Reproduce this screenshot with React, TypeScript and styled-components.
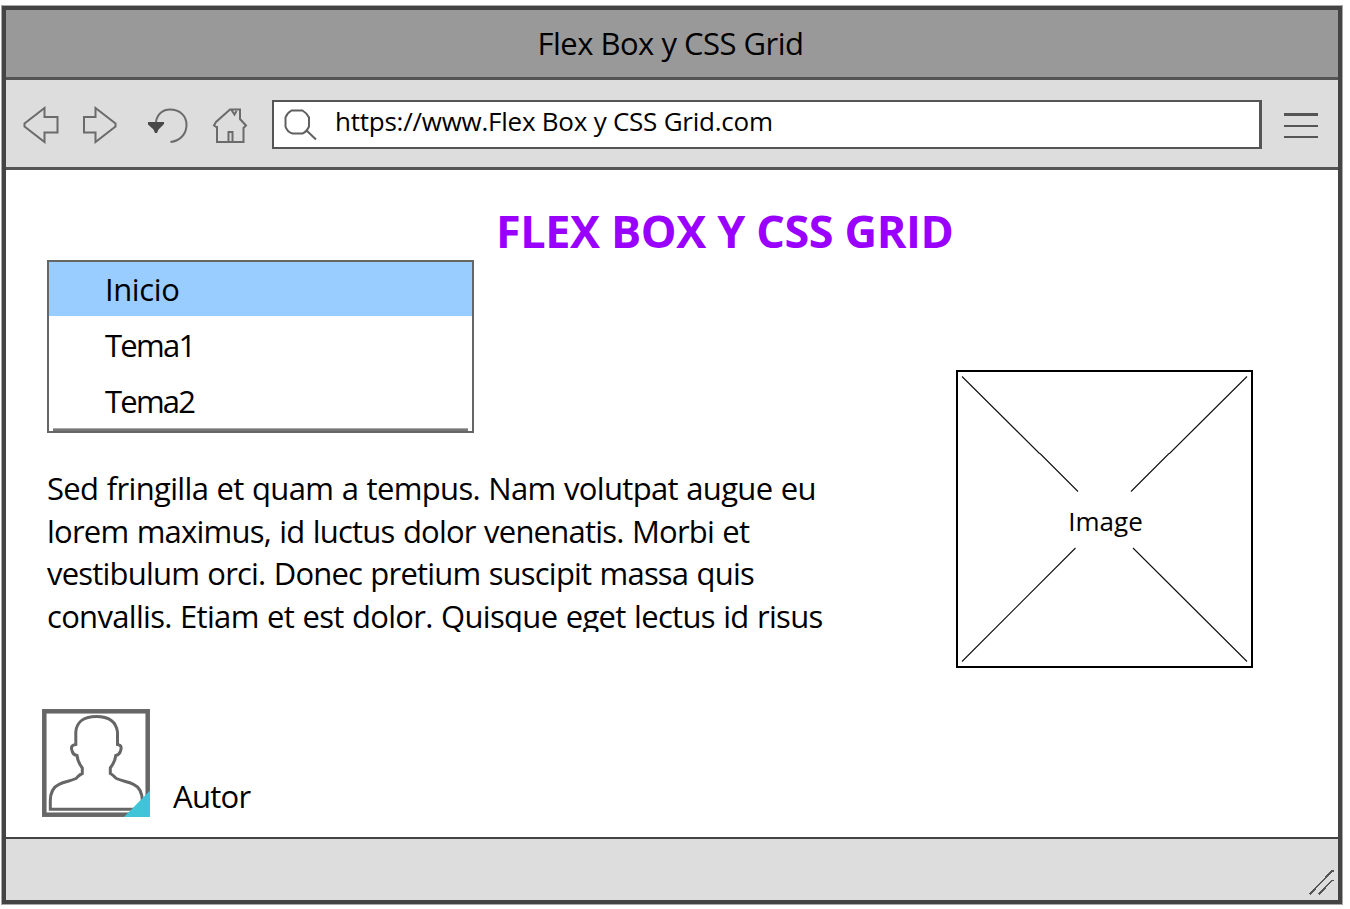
import React from "react";
import styled, { createGlobalStyle } from "styled-components";

const GlobalStyle = createGlobalStyle`
  *, *::before, *::after { box-sizing: border-box; }
  body {
    margin: 0;
    background: #fff;
    color: #000;
    font-family: "Open Sans", "Noto Sans", sans-serif;
    overflow: hidden;
  }
`;

const Stage = styled.div`
  width: 1350px;
  height: 909px;
  padding: 6px 0 0 2px;
`;

const BrowserWindow = styled.div`
  display: flex;
  flex-direction: column;
  width: 1340px;
  height: 898px;
  border: 4px solid #444;
  box-shadow: 0 0 0 1px #a8a8a8;
`;

const TitleBar = styled.header`
  display: flex;
  align-items: center;
  justify-content: center;
  height: 70px;
  padding: 0 3px 2px 0;
  border-bottom: 3px solid #555;
  background: #999;
  font-size: 31px;
  letter-spacing: -0.5px;
`;

const Toolbar = styled.nav`
  display: flex;
  align-items: center;
  height: 90px;
  padding: 1px 20px 0 17px;
  border-bottom: 3px solid #555;
  background: #ddd;
`;

const Icon = styled.svg<{ $gap?: number; $drop?: number }>`
  flex: none;
  display: block;
  margin-top: ${(p) => p.$drop ?? 0}px;
  margin-right: ${(p) => p.$gap ?? 0}px;
  fill: none;
  stroke: #6b6b6b;
  stroke-width: 2;
`;

const AddressBar = styled.div`
  display: flex;
  align-items: center;
  width: 990px;
  height: 49px;
  margin-right: 22px;
  padding-left: 9px;
  border: 2px solid #555;
  border-right-width: 3px;
  background: #fff;
`;

const Url = styled.span`
  padding-bottom: 6px;
  font-size: 26px;
  line-height: 36px;
  letter-spacing: -0.24px;
  white-space: nowrap;
`;

const Page = styled.main`
  flex: 1;
  padding: 0 85px 0 41px;
  background: #fff;
`;

const Heading = styled.h1`
  height: 90px;
  margin: 0;
  padding: 33px 0 0 449px;
  color: #9900ff;
  font-size: 45px;
  font-weight: 700;
  line-height: 56px;
  letter-spacing: -0.4px;
  white-space: nowrap;
`;

const Columns = styled.div`
  display: flex;
  justify-content: space-between;
`;

const Main = styled.div`
  width: 800px;
`;

const Menu = styled.ul`
  width: 427px;
  height: 173px;
  margin: 0;
  padding: 0;
  border: 2px solid #666;
  list-style: none;
`;

const MenuItem = styled.li<{ $active?: boolean; $tracking: number }>`
  height: ${(p) => (p.$active ? 54 : 56)}px;
  padding-left: 56px;
  background: ${(p) => (p.$active ? "#99ccff" : "transparent")};
  font-size: 31px;
  line-height: ${(p) => (p.$active ? 54 : 58)}px;
  letter-spacing: ${(p) => p.$tracking}px;
`;

const MenuShade = styled.li`
  height: 3px;
  margin: 0 4px;
  border-top: 1px solid #aaa;
  background: #777;
`;

const Paragraph = styled.p`
  height: 165px;
  margin: 34px 0 0;
  overflow: hidden;
  font-size: 31px;
  line-height: 42.67px;
  word-spacing: 1px;
`;

const Line = styled.span<{ $tracking: number }>`
  display: block;
  letter-spacing: ${(p) => p.$tracking}px;
  white-space: nowrap;
`;

const Author = styled.div`
  display: flex;
  align-items: flex-end;
  margin: 77px 0 0 -5px;
`;

const AuthorName = styled.span`
  padding: 0 0 1px 23px;
  font-size: 31px;
  line-height: 40px;
  letter-spacing: -0.7px;
`;

const Figure = styled.figure`
  display: grid;
  place-items: center;
  width: 297px;
  height: 298px;
  margin: 110px 0 0;
  border: 2px solid #000;
`;

const Cross = styled.svg`
  grid-area: 1 / 1;
  stroke: #111;
  stroke-width: 1.1;
`;

const Caption = styled.figcaption`
  grid-area: 1 / 1;
  padding: 3px 0 0 2px;
  font-size: 26px;
  line-height: 36px;
  letter-spacing: 0;
`;

const StatusBar = styled.footer`
  display: flex;
  align-items: flex-end;
  justify-content: flex-end;
  height: 63px;
  padding: 0 3px 4px;
  border-top: 2px solid #444;
  background: #ddd;
`;

const menu = [
  { label: "Inicio", active: true, tracking: -0.4 },
  { label: "Tema1", tracking: -1.7 },
  { label: "Tema2", tracking: -1.8 },
];

const lines = [
  { text: "Sed fringilla et quam a tempus. Nam volutpat augue eu", tracking: -0.67 },
  { text: "lorem maximus, id luctus dolor venenatis. Morbi et", tracking: -0.775 },
  { text: "vestibulum orci. Donec pretium suscipit massa quis", tracking: -0.8 },
  { text: "convallis. Etiam et est dolor. Quisque eget lectus id risus", tracking: -0.69 },
];

export default function App() {
  return (
    <Stage>
      <GlobalStyle />
      <BrowserWindow>
        <TitleBar>Flex Box y CSS Grid</TitleBar>
        <Toolbar>
          <Icon width="36" height="38" viewBox="23 106 36 38" $gap={23} $drop={2}>
            <path d="M44.500 108 24.500 123.500V126.500L44.500 142V132.500H57.500V117H44.500Z" />
          </Icon>
          <Icon width="36" height="38" viewBox="82 106 36 38" $gap={29} $drop={2}>
            <path d="M95.500 108 115.500 123.500V126.500L95.500 142V132.500H84V117H95.500Z" />
          </Icon>
          <Icon width="42" height="38" viewBox="147 106 42 38" $gap={23} $drop={2}>
            <path d="M156 122C157 114 163 109.500 170 109.500C180 109.500 186.500 116 186.500 125C186.500 134 180 141 170.500 142" />
            <path d="M148 122H164V124L158.500 129.500 157 133H155L153.500 129.500 148 124.500Z" fill="#484848" stroke="none" />
          </Icon>
          <Icon width="36" height="38" viewBox="212 106 36 38" $gap={24} $drop={2}>
            <path d="M217 127.500 214 125.500 216 122 230 109.500H240V119L246 125.500 243.500 128V142H217V126M228.500 142V132H232.500V142M231.500 110 234.500 114.500 236.500 111" />
          </Icon>
          <AddressBar>
            <Icon width="36" height="34" viewBox="283 107 36 34" $gap={16} $drop={1}>
              <path
                d="M291.500 109.500H302.500C305 111 307.500 113.500 309 116.500V125.500C307.500 129 305 131.500 302.500 132.500H292.500C289 131.500 286.500 129 285.500 125.500V116.500C286.500 113.500 289 111 291.500 109.500ZM306 129 316 138.500"
                stroke="#606060"
              />
            </Icon>
            <Url>https://www.Flex Box y CSS Grid.com</Url>
          </AddressBar>
          <Icon width="34" height="26" viewBox="0 0 34 26" shapeRendering="crispEdges" $drop={4}>
            <path d="M0 0H34V3H0ZM0 12H34V14H0ZM0 23H34V25H0Z" fill="#555" stroke="none" />
          </Icon>
        </Toolbar>
        <Page>
          <Heading>FLEX BOX Y CSS GRID</Heading>
          <Columns>
            <Main>
              <Menu>
                {menu.map((m) => (
                  <MenuItem key={m.label} $active={m.active} $tracking={m.tracking}>
                    {m.label}
                  </MenuItem>
                ))}
                <MenuShade />
              </Menu>
              <Paragraph>
                {lines.map((l) => (
                  <Line key={l.text} $tracking={l.tracking}>
                    {l.text}
                  </Line>
                ))}
              </Paragraph>
              <Author>
                <Icon width="108" height="108" viewBox="0 0 108 108">
                  <rect x="2.300" y="2.300" width="103.400" height="103.400" stroke="#666" strokeWidth="4.500" />
                  <path
                    d="M8.300 100.300V92C8.300 84 11 78 17 75.300C23 72.500 29 72 34 69.500C36 68 36.500 66 40.300 64.500V59C38 55.500 35.700 53 35 46.500C32 46 31 45 30.300 42.500C29 39.500 28.500 36 33.800 35.500V23C34.500 12 43 7.500 54.300 7.500C65.500 7.500 74 12 75.500 23V35.500C80 36 79.500 39.500 78.300 42.500C77.500 45 76.500 46 73.800 46.500C73 53 70.500 55.500 68.300 59V64.500C71.500 66 72 68 74.500 69.500C79.500 72 85.500 72.500 91.500 75.300C97.500 78 100.300 84 100.300 92V100.300Z"
                    stroke="#666"
                    strokeWidth="3"
                  />
                  <path d="M82 108 108.500 81V108Z" fill="#40c4d8" stroke="none" />
                </Icon>
                <AuthorName>Autor</AuthorName>
              </Author>
            </Main>
            <Figure>
              <Cross width="293" height="294" viewBox="958 372 293 294">
                <path
                  d="M962 376.500 1039 453 1040.500 454 1078 491.500M1247 376.500 1170 453 1168.500 454 1131 491.500M962 661.500 1075.500 548M1247 661.500 1133 548"
                  fill="none"
                />
              </Cross>
              <Caption>Image</Caption>
            </Figure>
          </Columns>
        </Page>
        <StatusBar>
          <Icon width="26" height="26" viewBox="1309 870 26 26" shapeRendering="crispEdges">
            <path d="M1309.500 894.500 1332 871H1334M1318.500 894.500 1332 880.500H1334" stroke="#555" strokeWidth="1.800" />
          </Icon>
        </StatusBar>
      </BrowserWindow>
    </Stage>
  );
}
